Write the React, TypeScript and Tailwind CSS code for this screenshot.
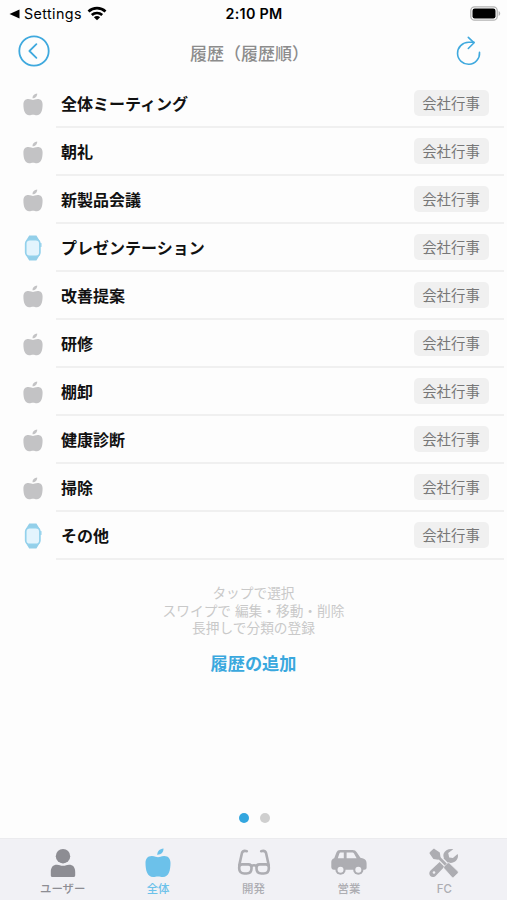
import { useState } from 'react';

interface HistoryItem {
  name: string;
  icon: 'apple' | 'watch';
}

const ITEMS: HistoryItem[] = [
  { name: '全体ミーティング', icon: 'apple' },
  { name: '朝礼', icon: 'apple' },
  { name: '新製品会議', icon: 'apple' },
  { name: 'プレゼンテーション', icon: 'watch' },
  { name: '改善提案', icon: 'apple' },
  { name: '研修', icon: 'apple' },
  { name: '棚卸', icon: 'apple' },
  { name: '健康診断', icon: 'apple' },
  { name: '掃除', icon: 'apple' },
  { name: 'その他', icon: 'watch' },
];

function AppleIcon({ className }: { className?: string }) {
  return (
    <svg viewBox="0 0 26 30" fill="currentColor" className={className}>
      <path d="M12.300 6.900C12.100 3.700 14.600 1 18.500.6c.2 3.500-2.300 6.100-6.200 6.300z" />
      <path d="M13 9.200c1.400 0 3-1.300 6.200-1.300 4.200 0 6.300 2.800 6.300 7.100 0 3.200-.4 7-1.500 9.600-1.200 2.900-3.300 4.500-6.100 4.500-2 0-2.900-.6-4.900-.6s-2.900.6-4.900.6c-2.800 0-4.900-1.600-6.100-4.500C.9 22 .5 18.200.5 15c0-4.300 2.100-7.100 6.300-7.100 3.200 0 4.800 1.300 6.200 1.300z" />
    </svg>
  );
}

function WatchIcon({ className }: { className?: string }) {
  return (
    <svg viewBox="0 0 18 26" className={className}>
      <path d="M5.200.6h7.200l3.400 5.400H1.800zM5.200 25.400h7.200l3.400-5.400H1.800z" fill="#93cfe9" />
      <rect x="1.700" y="4.600" width="14.200" height="16.800" rx="4" fill="#e3f4fd" stroke="#93d1ec" strokeWidth="1.700" />
      <path d="M16.900 8.500v3" stroke="#8fd0ec" strokeWidth="1.200" strokeLinecap="round" />
    </svg>
  );
}

function UserIcon() {
  return (
    <svg viewBox="0 0 26 30" fill="currentColor" className="h-[30px] w-[26px]">
      <circle cx="13" cy="8.200" r="7.200" />
      <path d="M.8 24c0-4.800 2.200-7.300 6.200-7.300 2.400 0 3.300 1.100 6 1.100s3.600-1.100 6-1.100c4 0 6.200 2.500 6.200 7.300v3.200c0 1.100-.6 1.800-1.700 1.800h-21C1.400 29 .8 28.300.8 27.200z" />
    </svg>
  );
}

function GlassesIcon() {
  return (
    <svg viewBox="0 0 34 30" fill="none" stroke="currentColor" strokeWidth="2.600" strokeLinecap="round" strokeLinejoin="round" className="h-[30px] w-[34px]">
      <path d="M9.800 3.200C7.300 2.500 5.600 3.100 4.900 5.200L2.300 17M24.200 3.200c2.500-.7 4.200-.1 4.900 2L31.700 17" />
      <path d="M5 16.400h6.500c2 0 3 1 3 3v1.200c0 3-1.900 4.900-5 4.900H7.200c-3.100 0-5-1.900-5-4.900v-1.400c0-1.800 1-2.800 2.800-2.800zM29 16.400h-6.500c-2 0-3 1-3 3v1.200c0 3 1.900 4.900 5 4.900h2.300c3.100 0 5-1.900 5-4.900v-1.400c0-1.800-1-2.800-2.800-2.800z" />
      <path d="M14.200 18c1.700-.9 3.900-.9 5.600 0" />
    </svg>
  );
}

function CarIcon() {
  return (
    <svg viewBox="0 0 36 30" className="h-[30px] w-[36px]">
      <path fill="currentColor" fillRule="evenodd" d="M9.200 2h12.200c2.200 0 3.400.8 4.500 2.600l3.500 5.100 2.800.9c2.300.8 3.400 2.500 3.400 4.800v4.200c0 1.300-.8 2.100-2.100 2.100H3c-1.700 0-2.700-.9-2.700-2.600v-5c0-2 1-3.200 2.900-3.900L5.400 4.600C6.200 2.700 7.300 2 9.200 2zm.9 2.500c-1 0-1.500.4-1.800 1.300l-1.500 4.400h6V4.500zm5.500 0v5.700h10l-2.600-4.600c-.5-.8-1-1.100-1.900-1.100z" />
      <circle cx="9.500" cy="21.700" r="5.100" fill="currentColor" />
      <circle cx="27.300" cy="21.700" r="5.100" fill="currentColor" />
      <circle cx="9.500" cy="21.700" r="3" fill="#f1f1f5" />
      <circle cx="27.300" cy="21.700" r="3" fill="#f1f1f5" />
    </svg>
  );
}

function ToolsIcon() {
  return (
    <svg viewBox="0 0 30 30" className="h-[30px] w-[30px]">
      {/* wrench */}
      <path fill="currentColor" d="M24.300 1.200c-4-1.100-8.400.7-9.600 4.400-.5 1.500-.4 3 .2 4.500L1.800 22.300c-1.900 1.800-1.900 4.300-.5 5.700 1.500 1.500 4.100 1.400 5.800-.5l12.300-12.900c4.700 1.500 9.400-1.600 9.600-6.500 0-.8-.1-1.500-.4-2.200l-4.700 4-3.700-.5-1-4.400z" />
      <circle cx="5" cy="24.500" r="1.300" fill="#f1f1f5" />
      {/* screwdriver */}
      <path d="M6.500 6.200l13 13" stroke="#f1f1f5" strokeWidth="5.400" />
      <path d="M6.500 6.200l13 13" stroke="currentColor" strokeWidth="2.800" />
      <path fill="currentColor" d="M1 4.100 4 1.200c.7-.5 1.300-.4 1.900.1l4.900 3.300.8 4.900-2.300 2.200-4.900-.8L.9 6c-.5-.7-.4-1.300.1-1.900z" />
      <path fill="currentColor" stroke="#f1f1f5" strokeWidth=".6" d="M15.200 20.500c-.7-.8-.6-1.500.1-2.200l3.100-3c.7-.6 1.400-.6 2.100 0l8.100 7.800c.8.800.8 1.500 0 2.300l-3.600 3.600c-.8.8-1.500.8-2.300 0z" />
    </svg>
  );
}

const TABS = [
  { label: 'ユーザー', icon: <UserIcon />, color: 'text-[#8d8d93]' },
  { label: '全体', icon: <AppleIcon className="h-[30px] w-[26px]" />, color: 'text-[#6cc1ea]' },
  { label: '開発', icon: <GlassesIcon />, color: 'text-[#adadb2]' },
  { label: '営業', icon: <CarIcon />, color: 'text-[#adadb2]' },
  { label: 'FC', icon: <ToolsIcon />, color: 'text-[#adadb2]' },
];

function StatusBar() {
  return (
    <div className="grid h-[27px] grid-cols-3 items-center pl-[9px] pr-[6px] text-black">
      <div className="flex items-center">
        <svg viewBox="0 0 11 10" className="h-[10px] w-[11px]">
          <path d="M.5 5 10.500.6v8.800z" />
        </svg>
        <span className="ml-1 text-[14.300px] tracking-[0.400px]">Settings</span>
        <svg viewBox="0 0 20 15" className="ml-[5px] h-[15px] w-[20px]" fill="none" stroke="black" strokeWidth="2.700">
          <path d="M1.500 5.400c4.800-4.500 12.200-4.500 17 0M4.800 9c2.900-2.700 7.500-2.700 10.400 0" />
          <path d="M10 14.300 6.900 11.200c1.800-1.500 4.400-1.500 6.200 0z" fill="black" stroke="none" />
        </svg>
      </div>
      <span className="pr-[2px] text-center text-[14.300px] font-semibold tracking-[0.300px]">2:10 PM</span>
      <svg viewBox="0 0 31 15" className="h-[15px] w-[31px] justify-self-end">
        <rect x=".8" y=".8" width="26.400" height="13.400" rx="3.800" fill="#fff" stroke="#b2b2b2" strokeWidth="1.300" />
        <rect x="2.500" y="2.500" width="23" height="10" rx="2.200" fill="black" />
        <path d="M28.600 5v5c2.100-.8 2.100-4.200 0-5z" fill="#b2b2b2" />
      </svg>
    </div>
  );
}

export default function App() {
  const [page, setPage] = useState(0);

  return (
    <div className="flex h-[900px] w-full flex-col overflow-hidden bg-[#fdfdfd] font-['Inter','Noto_Sans_CJK_JP',sans-serif]">
      <StatusBar />

      {/* Navigation */}
      <header className="flex h-[53px] items-start justify-between pl-[18px] pr-[25px]">
        <button className="mt-2 text-[#3fa9de]">
          <svg viewBox="0 0 32 32" className="h-8 w-8" fill="none" stroke="currentColor" strokeWidth="1.800" strokeLinecap="round" strokeLinejoin="round">
            <circle cx="16" cy="16" r="14.700" />
            <path d="M18.400 9.200 11.400 16l7 6.800" />
          </svg>
        </button>
        <h1 className="mt-[15px] pr-[7px] text-[17px] font-medium leading-6 text-[#8c8c8c]">履歴（履歴順）</h1>
        <button className="mt-[9px] text-[#3fa9de]">
          <svg viewBox="0 0 26 30" className="h-[30px] w-[26px]" fill="none" stroke="currentColor" strokeWidth="1.600" strokeLinecap="round" strokeLinejoin="round">
            <path d="M23.500 16.400A11 11 0 1 1 12.600 6.300h5.500" />
            <path d="M12.300 1.300 18.100 6.800l-5.800 5.700" />
          </svg>
        </button>
      </header>

      {/* History list */}
      <main className="flex grow flex-col">
        <ul>
          {ITEMS.map((item) => (
            <li key={item.name} className="flex h-12 pr-[3px]">
              <div className="flex w-14 shrink-0 items-center justify-center pl-[9px]">
                {item.icon === 'apple' ? (
                  <AppleIcon className="h-[23px] w-[20px] text-[#c3c3c5]" />
                ) : (
                  <WatchIcon className="mb-[1px] h-[26px] w-[18px]" />
                )}
              </div>
              <div className="flex grow items-center justify-between border-b-2 border-[#f0f0f0] pl-[5px] pr-[15px]">
                <span className="pt-[2px] text-[16px] font-bold text-[#111111]">{item.name}</span>
                <span className="flex h-[26px] w-[75px] items-center justify-center rounded-[5px] bg-[#f0f0f0] pt-[2px] pr-[1px] text-[14.400px] text-[#777777]">
                  会社行事
                </span>
              </div>
            </li>
          ))}
        </ul>

        <p className="mt-[25px] text-center text-[13.700px] leading-[17.500px] text-[#c9c9c9]">
          タップで選択
          <br />
          スワイプで 編集・移動・削除
          <br />
          長押しで分類の登録
        </p>
        <button className="mt-[14px] self-center text-[17.200px] font-bold leading-6 text-[#3aa8de]">履歴の追加</button>

        <div className="mt-auto mb-[15px] flex justify-center gap-[11px] pl-[1px]">
          {[0, 1].map((i) => (
            <button
              key={i}
              onClick={() => setPage(i)}
              className={`h-[10px] w-[10px] rounded-full ${page === i ? 'bg-[#33a6df]' : 'bg-[#cfcfcf]'}`}
            />
          ))}
        </div>
      </main>

      {/* Tab bar */}
      <nav className="flex h-[62px] shrink-0 border-t border-[#ebebee] bg-[#f1f1f5] px-[15px]">
        {TABS.map((tab) => (
          <button key={tab.label} className={`flex flex-1 flex-col items-center pt-[9px] ${tab.color}`}>
            {tab.icon}
            <span className="mt-[3px] text-[11.400px] font-medium leading-4">{tab.label}</span>
          </button>
        ))}
      </nav>
    </div>
  );
}
